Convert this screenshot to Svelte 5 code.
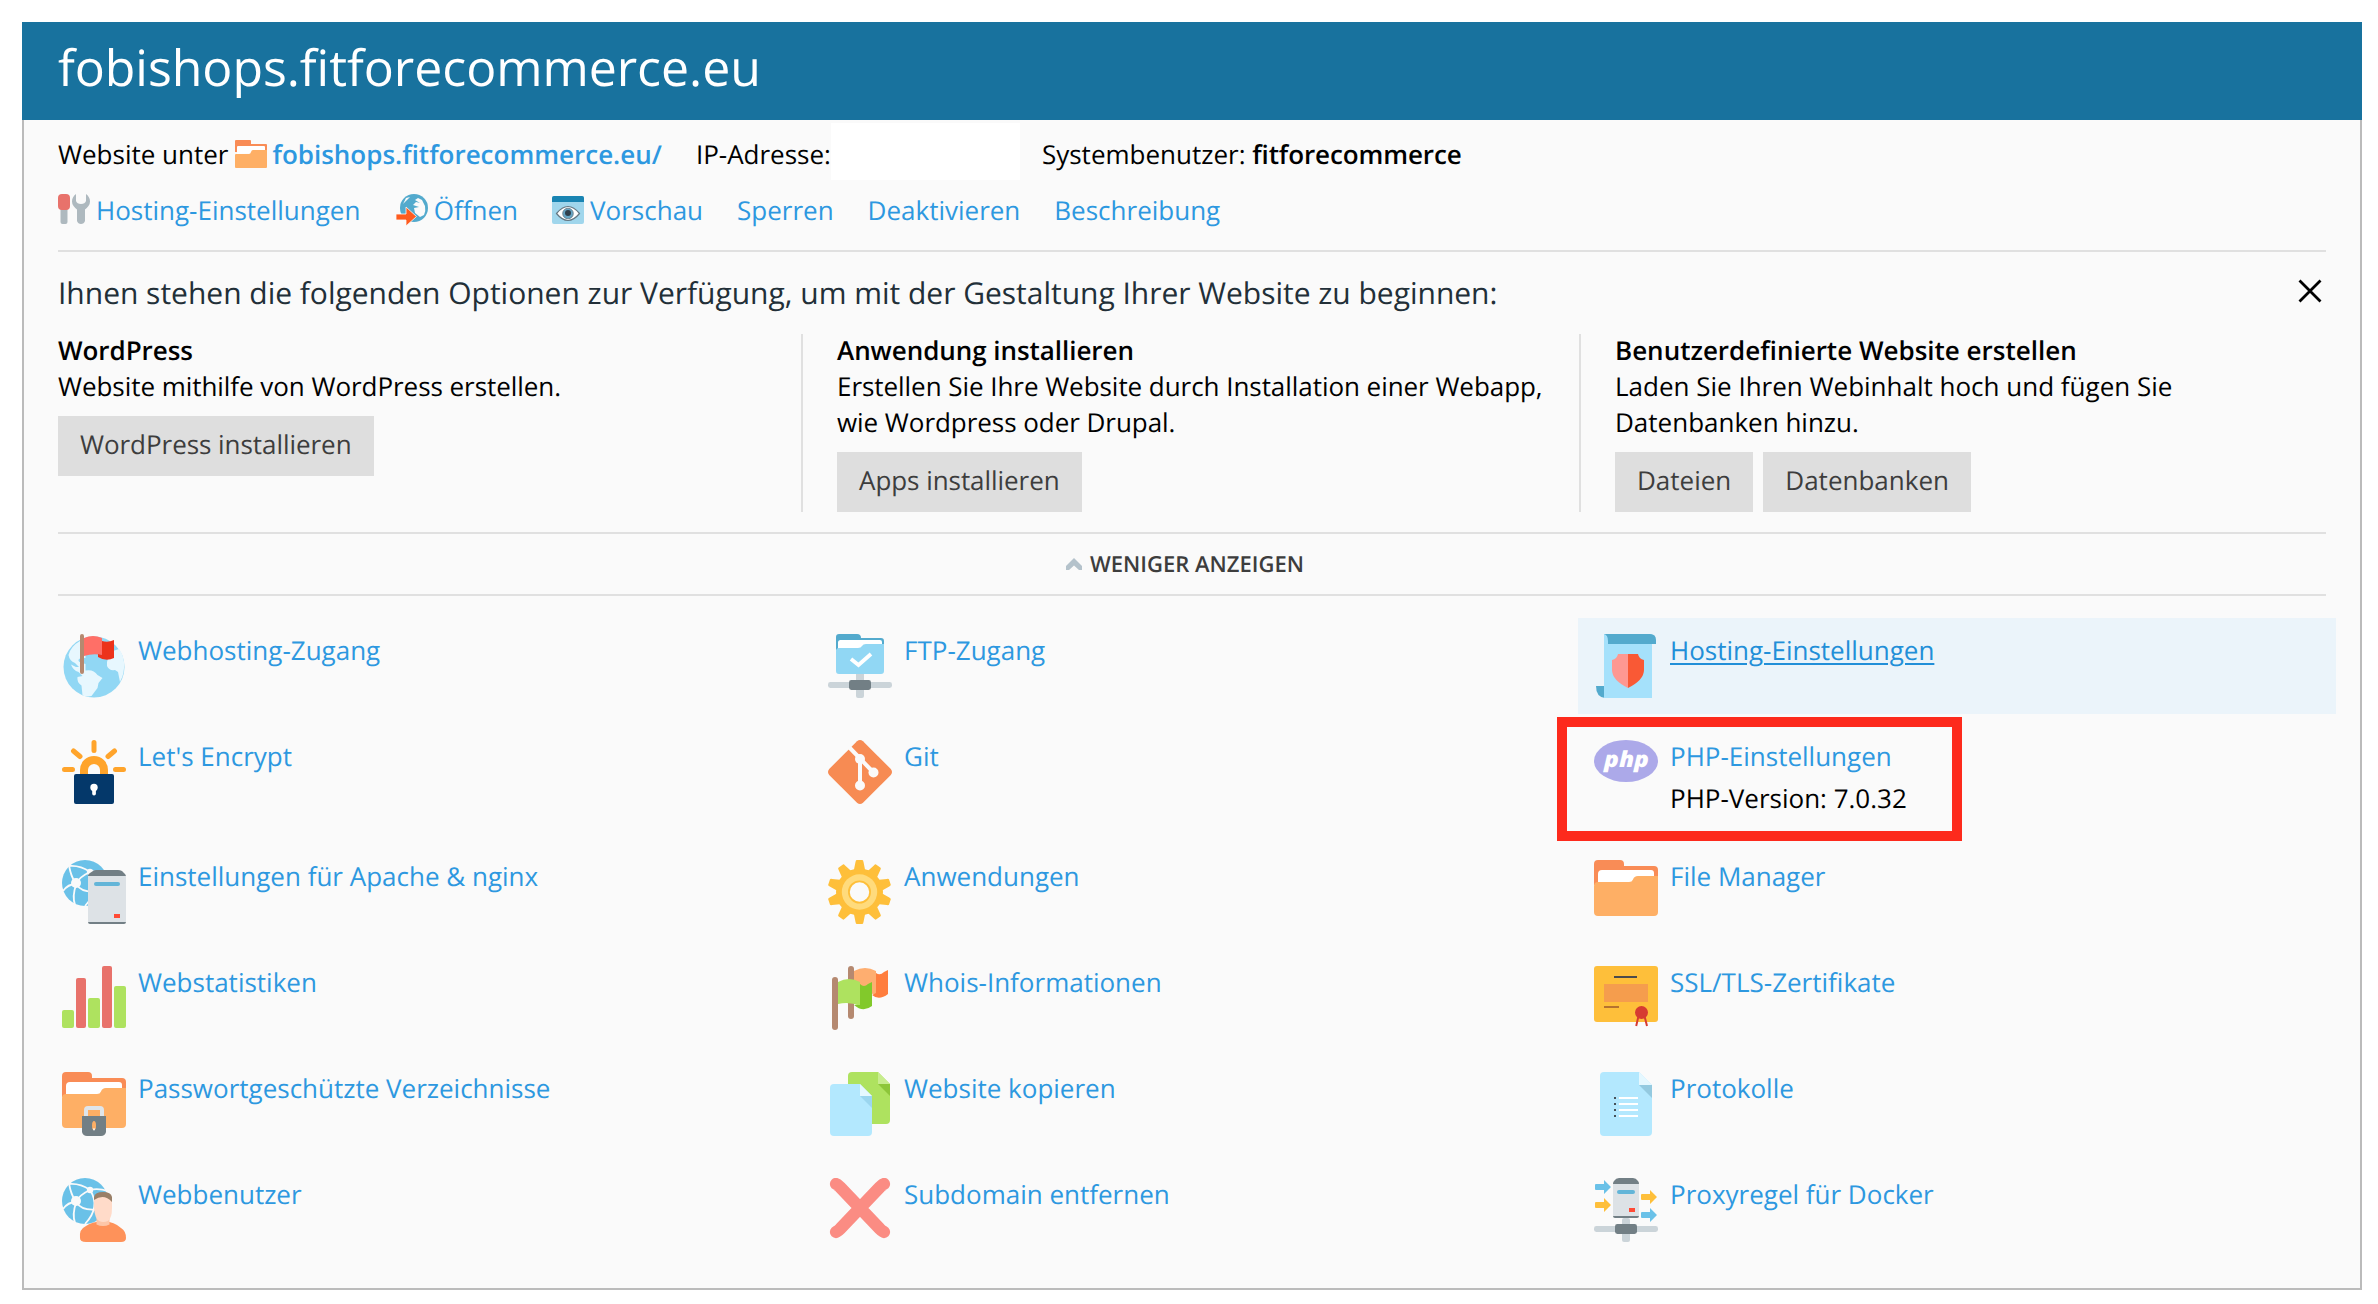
<script>
  const actions = [
    { icon: 'tools', label: 'Hosting-Einstellungen' },
    { icon: 'open', label: 'Öffnen' },
    { icon: 'preview', label: 'Vorschau' },
    { label: 'Sperren' },
    { label: 'Deaktivieren' },
    { label: 'Beschreibung' }
  ];
  const options = [
    { title: 'WordPress', lines: ['Website mithilfe von WordPress erstellen.'], buttons: ['WordPress installieren'] },
    { title: 'Anwendung installieren', lines: ['Erstellen Sie Ihre Website durch Installation einer Webapp,', 'wie Wordpress oder Drupal.'], buttons: ['Apps installieren'] },
    { title: 'Benutzerdefinierte Website erstellen', lines: ['Laden Sie Ihren Webinhalt hoch und fügen Sie', 'Datenbanken hinzu.'], buttons: ['Dateien', 'Datenbanken'] }
  ];
  const tools = [
    { icon: 'webhosting', label: 'Webhosting-Zugang' },
    { icon: 'ftp', label: 'FTP-Zugang' },
    { icon: 'hosting', label: 'Hosting-Einstellungen', active: true },
    { icon: 'letsencrypt', label: "Let's Encrypt" },
    { icon: 'git', label: 'Git' },
    { icon: 'php', label: 'PHP-Einstellungen', note: 'PHP-Version: 7.0.32', marked: true },
    { icon: 'apache', label: 'Einstellungen für Apache & nginx' },
    { icon: 'gear', label: 'Anwendungen' },
    { icon: 'folder', label: 'File Manager' },
    { icon: 'stats', label: 'Webstatistiken' },
    { icon: 'whois', label: 'Whois-Informationen' },
    { icon: 'cert', label: 'SSL/TLS-Zertifikate' },
    { icon: 'lockfolder', label: 'Passwortgeschützte Verzeichnisse' },
    { icon: 'copy', label: 'Website kopieren' },
    { icon: 'log', label: 'Protokolle' },
    { icon: 'webuser', label: 'Webbenutzer' },
    { icon: 'remove', label: 'Subdomain entfernen' },
    { icon: 'docker', label: 'Proxyregel für Docker' }
  ];
  const teeth = Array.from({ length: 10 }, (_, i) => i * 36);
</script>

{#snippet network()}
  <rect x="0" y="48" width="64" height="6" rx="2.4" fill="#cbd4d9" />
  <rect x="28" y="40" width="8" height="24" rx="2" fill="#cbd4d9" />
  <rect x="21" y="46" width="22" height="10" rx="2.4" fill="#727f85" />
{/snippet}

{#snippet folderShape()}
  <path d="M0 25V4q0-4 4-4h22q4 0 4 4v2h30q4 0 4 4v14z" fill="#f98c56" />
  <path d="M4 24V14q0-4 4-4h49q3 0 3 3v8z" fill="#fff" />
  <path d="M0 26q0-4 4-4h31q3 0 4-2.500q1-3.500 5-3.500h20v36q0 4-4 4H4q-4 0-4-4z" fill="#feaf65" />
{/snippet}

{#snippet webGlobe()}
  <circle cx="23" cy="23" r="23" fill="#6ac1e8" />
  <g fill="none" stroke="#fafafa" stroke-width="1.800">
    <path d="M7 5.500Q9 17 14 24M7 6Q18 5 28 12M28 12Q17 17 14 24M28 12Q36 10 46 13M14 24Q20 33 34 31.500M14 25Q10 36 13 45M28 12Q39 29 23 46M14 24Q6 24 1 31" />
  </g>
  <circle cx="14" cy="23" r="5" fill="#fafafa" />
  <circle cx="28" cy="12" r="3.200" fill="#fafafa" />
{/snippet}

{#snippet icon(name)}
  <svg class="icon" viewBox="0 0 64 64" aria-hidden="true">
    {#if name === 'webhosting'}
      <circle cx="32" cy="33" r="30.500" fill="#91d7f4" />
      <path d="M18 7Q9 12 6.500 21q1 6 6.500 8l4 4h-3l-5-2.500q2 6 7.500 7.500l4 4-5 1q-1 5 4 8.500l1 10q5 1.500 9 .5l6-8 1-5 4-5-5-3q-4-6-12-4.500V30l-6-2q-3-2.500 2-4h4V6z" fill="#e7f7fe" />
      <path d="M51 17q-7 7-6 15 2 5 8 4l3 2 2 10q5-9 4-20-1-8-5-13z" fill="#e7f7fe" />
      <path d="M22 4q9-4 18 0v17q-9-2-18 1z" fill="#ff6f67" />
      <path d="M40 7q6 2 12-1v18q-8 4-16-1v-3l4 1z" fill="#ec331b" />
      <rect x="18" y="0" width="4" height="40" rx="2" fill="#b58970" />
    {:else if name === 'ftp'}
      <path d="M8 16V3q0-3 3-3h18q4 0 4 4h20q3 0 3 3v10z" fill="#53aacd" />
      <path d="M10 16V8.500Q10 6 12.500 6H52q2 0 2 2v8z" fill="#fff" />
      <path d="M8 17q0-3 3-3h19q3 0 4-2 1-2 4-2h18v27q0 3-3 3H11q-3 0-3-3z" fill="#91d7f4" />
      <path d="M23 25l7.500 6L43 20" fill="none" stroke="#fff" stroke-width="3.800" />
      {@render network()}
      <rect x="28" y="40" width="8" height="6" fill="#cbd4d9" />
    {:else if name === 'hosting'}
      <path d="M2 52h9v12q-9-1-9-12z" fill="#53aacd" />
      <path d="M10 0h48v64H10z" fill="#a5e1fb" />
      <path d="M10 0h46q6 0 6 6v4H14V7q0-6-4-7z" fill="#53aacd" />
      <path d="M34 20v34Q18 46 18 36V26q5-1 6-6z" fill="#fe9892" />
      <path d="M34 20h10q1 5 6 6v10q0 10-16 18z" fill="#f95935" />
    {:else if name === 'letsencrypt'}
      <path d="M32 2.500v8M11.500 11l6.500 5.500M52.500 11L46 16.500M2.500 29.500h8M61.500 29.500h-8" stroke="#ffa42b" stroke-width="5" stroke-linecap="round" />
      <path d="M22 36v-6a10 10 0 0 1 20 0v6" fill="none" stroke="#ffa42b" stroke-width="8" />
      <rect x="12" y="34" width="40" height="30" rx="2" fill="#04386a" />
      <circle cx="32" cy="47.500" r="3.700" fill="#fff" />
      <rect x="30.200" y="49" width="3.700" height="6.500" rx="1.800" fill="#fff" />
    {:else if name === 'git'}
      <path d="M29 1.200q3-2.400 6 0l27.800 27.800q2.400 3 0 6L35 62.800q-3 2.400-6 0L1.200 35q-2.400-3 0-6z" fill="#f78b53" />
      <path d="M20.500 6.500L32 18.500 45.500 32.500M32 19v26" fill="none" stroke="#fafafa" stroke-width="4" />
      <circle cx="32" cy="19" r="5" fill="#fafafa" /><circle cx="45.500" cy="32.500" r="5" fill="#fafafa" /><circle cx="32" cy="45.500" r="5" fill="#fafafa" />
    {:else if name === 'php'}
      <ellipse cx="32" cy="21" rx="32" ry="21" fill="#aca9e9" />
      <text class="php" x="32.500" y="26.500" text-anchor="middle" textLength="45" lengthAdjust="spacingAndGlyphs">php</text>
    {:else if name === 'apache'}
      {@render webGlobe()}
      <path d="M26 16q0-2 2-3l3-2q1-1 3-1h22q2 0 4 1l3 3q1 1 1 3v45q0 2-2 2H28q-2 0-2-2z" fill="#727f85" />
      <path d="M26 16h38v46H26z" fill="#dde2e6" />
      <rect x="32" y="22" width="26" height="4" rx="2" fill="#63b5d8" />
      <rect x="52" y="54" width="6" height="4" fill="#ff4b36" />
    {:else if name === 'gear'}
      {#each teeth as angle}
        <path d="M26 12l2-10q.3-2 1.200-2h5.600q.9 0 1.200 2l2 10z" transform="translate(-.5 0) rotate({angle} 32 32)" fill="#febf3a" />
      {/each}
      <circle cx="31.500" cy="32" r="23.500" fill="#febf3a" />
      <circle cx="31.500" cy="32" r="17.700" fill="#ffdb7c" />
      <circle cx="31.500" cy="32" r="10.600" fill="#fafafa" stroke="#febf3a" stroke-width="1.800" />
    {:else if name === 'folder'}
      {@render folderShape()}
    {:else if name === 'stats'}
      <rect x="0" y="44" width="12" height="18" rx="2" fill="#aee25f" />
      <rect x="14" y="12" width="10" height="50" rx="2" fill="#e8726b" />
      <rect x="26" y="32" width="12" height="30" rx="2" fill="#aee25f" />
      <rect x="40" y="0" width="10" height="62" rx="2" fill="#e8726b" />
      <rect x="52" y="20" width="12" height="42" rx="2" fill="#aee25f" />
    {:else if name === 'whois'}
      <rect x="20" y="0" width="6" height="53" rx="3" fill="#b58970" />
      <path d="M26 5q11-6 22 0v24q-11-5-22-2z" fill="#feae70" />
      <path d="M48 7q4 3 8-1l4-2v24q-9 7-16 1l4-2z" fill="#ff7d3d" />
      <rect x="4" y="11" width="6" height="53" rx="3" fill="#b58970" />
      <path d="M10 16q11-6 22 0v24q-11-5-22-2z" fill="#aee25f" />
      <path d="M32 18q4 4 8 0l4-2v24q-9 7-18-1l6 0z" fill="#82c92b" />
    {:else if name === 'cert'}
      <rect x="0" y="0" width="64" height="56" rx="3" fill="#febf3a" />
      <rect x="20" y="10" width="23" height="2" fill="#4b4b4b" />
      <rect x="10" y="18" width="44" height="18" fill="#f59d4d" />
      <rect x="10" y="40" width="15" height="2" fill="#b5722f" />
      <circle cx="47.500" cy="46.500" r="6.500" fill="#d63b31" />
      <path d="M44.500 50L42.200 60M50.500 50l2.500 10" stroke="#d63b31" stroke-width="2" />
    {:else if name === 'lockfolder'}
      {@render folderShape()}
      <path d="M24 46v-8q0-2 2-2h12q2 0 2 2v8" fill="none" stroke="#dfe5ea" stroke-width="4" />
      <path d="M20 44h24v16q-1 4-5 4H25q-4 0-5-4z" fill="#727f85" />
      <ellipse cx="32" cy="53.500" rx="2" ry="4.600" fill="#feaf65" /><path d="M30.700 56.500h2.600l-1.300 2.500z" fill="#fff" />
    {:else if name === 'copy'}
      <path d="M20 4q0-4 4-4h26l12 12v36q0 4-4 4H24q-4 0-4-4z" fill="#aee25f" />
      <path d="M50 0v12h12z" fill="#c7ec8e" /><path d="M50 12h12v12z" fill="#8dc63a" />
      <path d="M2 16q0-4 4-4h26l12 12v36q0 4-4 4H6q-4 0-4-4z" fill="#b3e8fe" />
      <path d="M32 12v12h12z" fill="#e5f8ff" /><path d="M32 24h12v12z" fill="#9bd6ef" />
    {:else if name === 'log'}
      <path d="M6 4q0-4 4-4h35l13 13v47q0 4-4 4H10q-4 0-4-4z" fill="#b3e8fe" />
      <path d="M45 0v13h13z" fill="#e5f8ff" /><path d="M45 13h13v13z" fill="#94cae0" />
      <path d="M25 26h19M25 32h19M25 38h19M25 44h19" stroke="#fff" stroke-width="2" />
      <path d="M20 26h2M20 32h2M20 38h2M20 44h2" stroke="#465158" stroke-width="2" />
    {:else if name === 'webuser'}
      {@render webGlobe()}
      <path d="M18 60q-1-9 6-12 5-4 17-5 12 1 18 7 5 3 5 10 0 4-5 4H24q-6 0-6-4z" fill="#fe925a" />
      <path d="M34.500 40h13v6.500q-6.500 3-13 0z" fill="#fdc6a8" />
      <path d="M32 20q8-5 18 1v9q0 10-4 13-5 2-9 0-4-2-5-13z" fill="#ffdbc9" />
      <path d="M32 22v-3q1-5 9-5t9 5v5q-8-9-18-2z" fill="#997f67" />
    {:else if name === 'remove'}
      <path d="M8 6Q9 6 12 9L52 51Q55 54 56 54M56 6Q55 6 52 9L12 51Q9 54 8 54" fill="none" stroke="#fb8c83" stroke-width="12.300" stroke-linecap="round" />
    {:else if name === 'docker'}
      {@render network()}
      <path d="M19 6q0-2 1-3 2-3 5-3h14q3 0 5 3 1 1 1 3v32q0 2-2 2H21q-2 0-2-2z" fill="#727f85" />
      <path d="M19 6h26v32H19z" fill="#dde2e6" />
      <rect x="23" y="12" width="18" height="4" rx="2" fill="#63b5d8" />
      <rect x="35" y="30" width="6" height="4" fill="#ff4b36" />
      <path d="M1 7q0-1 1-1h8V2l7 7-7 7v-4H2q-1 0-1-1z" fill="#6ac1e8" />
      <path d="M1 25q0-1 1-1h8v-4l7 7-7 7v-4H2q-1 0-1-1z" fill="#febf3a" />
      <path d="M47 17q0-1 1-1h8v-4l7 7-7 7v-4h-8q-1 0-1-1z" fill="#febf3a" />
      <path d="M47 35q0-1 1-1h8v-4l7 7-7 7v-4h-8q-1 0-1-1z" fill="#6ac1e8" />
    {/if}
  </svg>
{/snippet}

{#snippet smallIcon(name)}
  <svg class="small" viewBox="0 0 32 32" aria-hidden="true">
    {#if name === 'folder'}
      <path d="M0 14V3q0-1 1-1h14q1 0 1 1v3h15q1 0 1 1v8z" fill="#f98c56" />
      <path d="M2 16V9q0-1 1-1h26q1 0 1 1v5z" fill="#fff" />
      <path d="M0 17q0-1 1-1h13q1.500 0 2-2t2-2h14v17q0 1-1 1H1q-1 0-1-1z" fill="#feaf65" />
    {:else if name === 'tools'}
      <rect x="2.500" y="12" width="7" height="18" rx="2" fill="#aeb9bf" />
      <rect x="0" y="0" width="12" height="16" rx="4" fill="#e8726b" />
      <path d="M18 0q-4 3-4 7.500 0 4 5 8V27q1 3 4 3t4-3V15.500q5-4 5-8Q32 3 28 0v7q-1 3-5 3t-5-3z" fill="#aeb9bf" />
    {:else if name === 'open'}
      <circle cx="18" cy="14" r="14" fill="#53aacd" />
      <path d="M22 4l4 2 3 6q1 5-1 9l-4 2-5-4-1-5 5-1-6-2 3-3 4 1-5-3zM10 4l4-1-3 3-4 4z" fill="#fafafa" />
      <path d="M0 20h10v-7l10.500 9.500L10 32v-6H0z" fill="#ff5b1e" stroke="#fafafa" stroke-width=".8" />
    {:else}
      <rect x="0" y="2" width="32" height="28" rx="2" fill="#a0d6ec" />
      <path d="M0 8V4q0-2 2-2h28q2 0 2 2v4z" fill="#1984b2" />
      <path d="M4.500 19.500q11.500-14 23 0-11.500 14-23 0z" fill="#fff" stroke="#647782" stroke-width="1.200" />
      <circle cx="16" cy="19.500" r="5.300" fill="#66a5c4" stroke="#647782" stroke-width=".8" /><circle cx="16" cy="19" r="3" fill="#2f3f4b" />
    {/if}
  </svg>
{/snippet}

<main class="panel">
  <header><h1>fobishops.fitforecommerce.eu</h1></header>

  <section class="summary">
    <div class="info">
      <span class="site">Website unter {@render smallIcon('folder')}<a class="strong" href="#site">fobishops.fitforecommerce.eu/</a></span>
      <span class="ip">IP-Adresse:<span class="blank"></span></span>
      <span>Systembenutzer: <b>fitforecommerce</b></span>
    </div>
    <nav class="actions">
      {#each actions as action}
        <a href="#action">{#if action.icon}{@render smallIcon(action.icon)}{/if}{action.label}</a>
      {/each}
    </nav>
  </section>

  <section class="start">
    <div class="start-head">
      <h2>Ihnen stehen die folgenden Optionen zur Verfügung, um mit der Gestaltung Ihrer Website zu beginnen:</h2>
      <svg class="close" viewBox="0 0 24 24" role="img" aria-label="Schließen"><path d="M1.500 1.500l21 21M22.500 1.500l-21 21" stroke="#000" stroke-width="2.800" /></svg>
    </div>
    <div class="options">
      {#each options as option}
        <article>
          <h3>{option.title}</h3>
          {#each option.lines as line}<p>{line}</p>{/each}
          <div class="buttons">
            {#each option.buttons as label}<button>{label}</button>{/each}
          </div>
        </article>
      {/each}
    </div>
  </section>

  <div class="toggle">
    <svg class="chevron" viewBox="0 0 16 14" aria-hidden="true"><path d="M8 1l8 8v4h-3L8 8.500 3 13H0V9z" fill="#b4c2cb" /></svg>
    WENIGER ANZEIGEN
  </div>

  <section class="tools">
    {#each tools as tool}
      <div class="tool" class:active={tool.active} class:marked={tool.marked}>
        {@render icon(tool.icon)}
        <div class="text">
          <a href="#tool">{tool.label}</a>
          {#if tool.note}<span>{tool.note}</span>{/if}
        </div>
      </div>
    {/each}
  </section>
</main>

<style>
  :global(body) { background: #fff; }
  .panel {
    box-sizing: border-box;
    width: 2340px;
    height: 1268px;
    margin: 22px 0 0 22px;
    border: 2px solid #bbb;
    border-top: 0;
    background: #fafafa;
    font: 26px/36px "Open Sans", sans-serif;
    text-rendering: geometricPrecision;
    color: #000;
  }
  h1, h2, h3, p { margin: 0; font-weight: 400; }
  a { color: #2d98e0; text-decoration: none; }
  header {
    height: 98px;
    margin: 0 -2px;
    padding-left: 36px;
    box-sizing: border-box;
    background: #18729e;
    color: #fff;
  }
  h1 { font-size: 50px; line-height: 90px; letter-spacing: -.04px; white-space: nowrap; font-variant-ligatures: common-ligatures; }
  .summary {
    box-sizing: border-box;
    height: 132px;
    margin: 0 34px;
    padding-top: 3px;
    border-bottom: 2px solid #e0e0e0;
    white-space: nowrap;
  }
  .info { display: flex; height: 61px; align-items: center; }
  .site { display: flex; align-items: center; margin-right: 34px; }
  .strong, b { font-weight: 600; }
  b { letter-spacing: -.1px; }
  .small { width: 32px; height: 32px; flex: none; margin-right: 6px; }
  .site .small { margin-left: 7px; }
  .site .strong { margin-left: -1px; }
  .ip { display: flex; height: 61px; align-items: center; margin-right: 22px; }
  .blank { align-self: flex-start; width: 189px; height: 57px; background: #fff; }
  .actions { display: flex; gap: 34px; height: 52px; align-items: center; }
  .actions a { display: flex; align-items: center; }
  .actions a:first-child { margin-right: 1.5px; }
  .start { margin: 0 34px; padding-bottom: 20px; border-bottom: 2px solid #e0e0e0; }
  .start-head { display: flex; height: 82px; justify-content: space-between; box-sizing: border-box; padding-top: 20px; }
  h2 { font-size: 30px; line-height: 42px; letter-spacing: -.015px; color: #222f38; white-space: nowrap; }
  .close { width: 24px; height: 24px; margin: 7px 4px 0 0; }
  .options { display: grid; grid-template-columns: 743px 778px 1fr; height: 178px; white-space: nowrap; }
  article { letter-spacing: -.05px; }
  article:last-child { letter-spacing: 0; }
  article + article { border-left: 2px solid #e0e0e0; padding-left: 34px; }
  h3 { font-size: 26px; line-height: 36px; font-weight: 600; margin-top: -2px; }
  .buttons { display: flex; gap: 10px; margin-top: 12px; }
  button {
    height: 60px;
    padding: 0 22px 4px;
    border: 0;
    background: #dedede;
    color: #3d3d3d;
    font: inherit;
    letter-spacing: inherit;
    text-rendering: inherit;
  }
  .toggle {
    display: flex;
    align-items: center;
    justify-content: center;
    gap: 8px;
    height: 60px;
    margin: 0 34px;
    padding-right: 14px;
    border-bottom: 2px solid #e0e0e0;
    font-size: 22px;
    font-weight: 600;
    color: #3d3d3d;
  }
  .chevron { width: 16px; height: 14px; }
  .tools {
    display: grid;
    grid-template-columns: repeat(3, 758px);
    gap: 10px 8px;
    margin: 22px 0 0 22px;
  }
  .tool {
    position: relative;
    display: flex;
    gap: 12px;
    box-sizing: border-box;
    min-height: 96px;
    padding: 14px 16px 18px;
  }
  .icon { width: 64px; height: 64px; flex: none; margin: 2px 0 -4px; }
  .text { display: flex; flex-direction: column; gap: 6px; }
  .active { background: #ebf4fa; }
  .active a { color: #228fd8; text-decoration: underline; text-decoration-thickness: 2px; text-underline-offset: 3px; }
  .marked::after {
    content: "";
    position: absolute;
    left: -21px;
    top: -7px;
    width: 385px;
    height: 104px;
    border: 10px solid #fd2a1c;
  }
  .php { font: italic 800 22px "Open Sans", sans-serif; fill: #fff; }
</style>
